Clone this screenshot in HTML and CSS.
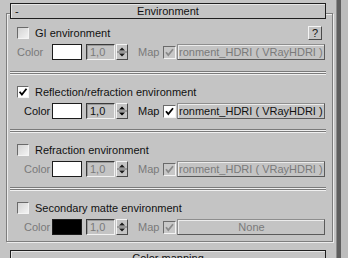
FILE: index.html
```html
<!DOCTYPE html>
<html lang="en">
<head>
    <meta charset="UTF-8">
    <title>Environment</title>
    <link rel="stylesheet" href="styles.css">
</head>
<body>
    <div class="workspace">
        <div class="panel">
            <div class="rollout">
                <div class="rollout-head"><span class="toggle">-</span><span>Environment</span><span></span></div>

                <div class="section first">
                    <div class="check-row">
                        <span class="check"><span class="box"></span>GI environment</span>
                        <span class="help">?</span>
                    </div>
                    <div class="ctrl-row">
                        <span class="lbl lbl-first dim">Color</span>
                        <span class="swatch"></span>
                        <span class="spin dim">1,0</span>
                        <span class="arrows"><svg width="12" height="16" viewBox="0 0 12 16"><path d="M3 6.5h6L6 3.5z M3 9.5h6L6 12.5z" fill="#1a1a1a"/><path d="M1 8h10" stroke="#6a6a6a"/></svg></span>
                        <span class="map-lbl dim">Map</span>
                        <span class="box box-map off"><svg width="11" height="11" viewBox="0 0 11 11"><path d="M2 5.2L4.3 8 9 2.2" fill="none" stroke="#8a8a8a" stroke-width="1.8"/></svg></span>
                        <span class="map-btn dim">ronment_HDRI ( VRayHDRI )</span>
                    </div>
                </div>
                <div class="sep"></div>

                <div class="section">
                    <div class="check-row">
                        <span class="check"><span class="box on"><svg width="10" height="10" viewBox="0 0 10 10"><path d="M1.6 4.8L3.9 7.6 8.5 1.8" fill="none" stroke="#000" stroke-width="1.8"/></svg></span>Reflection/refraction environment</span>
                    </div>
                    <div class="ctrl-row">
                        <span class="lbl">Color</span>
                        <span class="swatch"></span>
                        <span class="spin">1,0</span>
                        <span class="arrows"><svg width="12" height="16" viewBox="0 0 12 16"><path d="M3 6.5h6L6 3.5z M3 9.5h6L6 12.5z" fill="#000"/><path d="M1 8h10" stroke="#6a6a6a"/></svg></span>
                        <span class="map-lbl">Map</span>
                        <span class="box box-map on"><svg width="11" height="11" viewBox="0 0 11 11"><path d="M2 5.2L4.3 8 9 2.2" fill="none" stroke="#000" stroke-width="1.8"/></svg></span>
                        <span class="map-btn">ronment_HDRI ( VRayHDRI )</span>
                    </div>
                </div>
                <div class="sep"></div>

                <div class="section">
                    <div class="check-row">
                        <span class="check"><span class="box"></span>Refraction environment</span>
                    </div>
                    <div class="ctrl-row">
                        <span class="lbl dim">Color</span>
                        <span class="swatch"></span>
                        <span class="spin dim">1,0</span>
                        <span class="arrows"><svg width="12" height="16" viewBox="0 0 12 16"><path d="M3 6.5h6L6 3.5z M3 9.5h6L6 12.5z" fill="#1a1a1a"/><path d="M1 8h10" stroke="#6a6a6a"/></svg></span>
                        <span class="map-lbl dim">Map</span>
                        <span class="box box-map off"><svg width="11" height="11" viewBox="0 0 11 11"><path d="M2 5.2L4.3 8 9 2.2" fill="none" stroke="#8a8a8a" stroke-width="1.8"/></svg></span>
                        <span class="map-btn dim">ronment_HDRI ( VRayHDRI )</span>
                    </div>
                </div>
                <div class="sep"></div>

                <div class="section last">
                    <div class="check-row">
                        <span class="check"><span class="box"></span>Secondary matte environment</span>
                    </div>
                    <div class="ctrl-row">
                        <span class="lbl dim">Color</span>
                        <span class="swatch black"></span>
                        <span class="spin dim">1,0</span>
                        <span class="arrows"><svg width="12" height="16" viewBox="0 0 12 16"><path d="M3 6.5h6L6 3.5z M3 9.5h6L6 12.5z" fill="#1a1a1a"/><path d="M1 8h10" stroke="#6a6a6a"/></svg></span>
                        <span class="map-lbl dim">Map</span>
                        <span class="box box-map off"><svg width="11" height="11" viewBox="0 0 11 11"><path d="M2 5.2L4.3 8 9 2.2" fill="none" stroke="#8a8a8a" stroke-width="1.8"/></svg></span>
                        <span class="map-btn none dim">None</span>
                    </div>
                </div>
            </div>

            <div class="rollout next">
                <div class="rollout-head"><span></span><span>Color mapping</span><span></span></div>
            </div>
        </div>
        <div class="scroll"></div>
    </div>
</body>
</html>
```

FILE: styles.css
```css
body {
    margin: 0;
    width: 348px;
    height: 258px;
    overflow: hidden;
    background: #c4c4c4;
    color: #111;
    font-family: "Liberation Sans", Arial, sans-serif;
    font-size: 11px;
}

.workspace {
    display: flex;
    height: 258px;
}

.panel {
    width: 336px;
    padding-top: 3px;
}

.scroll {
    flex: 1;
    border-left: 1px solid #8c8c8c;
    background: linear-gradient(to right, #5e5e5e 0 4px, #bcbcbc 4px);
}

.rollout {
    margin: 10px 3px 0 6px;
    border: 1px solid #7e7e7e;
    box-shadow: inset 1px 1px 0 #ececec, 1px 1px 0 #ececec;
}

.rollout.next {
    margin-top: 18px;
}

.rollout-head {
    display: grid;
    grid-template-columns: 1fr auto 1fr;
    height: 14px;
    line-height: 14px;
    margin: -11px 6px 0 3px;
    border: 1px solid #1e1e1e;
    background: #c4c4c4;
    box-shadow: inset 1px 1px 0 #e6e6e6;
}

.toggle {
    padding-left: 4px;
}

.section {
    padding: 10px 0 10px 0;
}

.section.first {
    padding: 7px 0 11px 0;
}

.section.last {
    padding-bottom: 6px;
}

.sep {
    height: 1px;
    margin: 0 6px 1px 3px;
    border-top: 1px solid #7a7a7a;
    border-bottom: 1px solid #7a7a7a;
    background: #f0f0f0;
    box-shadow: 0 1px 0 #f0f0f0;
}

.check-row {
    display: flex;
    justify-content: space-between;
    align-items: center;
    height: 14px;
    padding: 0 10px 0 10px;
}

.check {
    display: flex;
    align-items: center;
    gap: 6px;
    font-size: 11px;
}

.box {
    display: flex;
    align-items: center;
    justify-content: center;
    box-sizing: border-box;
    width: 12px;
    height: 12px;
    border: 1px solid;
    border-color: #6a6a6a #f4f4f4 #f4f4f4 #6a6a6a;
    background: linear-gradient(135deg, #d4d4d4, #f2f2f2);
}

.box.on {
    background: #fff;
}

.box-map {
    width: 13px;
    height: 13px;
    margin: 0 1px 0 4px;
}

.box-map.off {
    background: #c8c8c8;
}

.help {
    box-sizing: border-box;
    width: 14px;
    height: 14px;
    line-height: 12px;
    text-align: center;
    border: 1px solid;
    border-color: #f4f4f4 #4a4a4a #4a4a4a #f4f4f4;
}

.ctrl-row {
    display: flex;
    align-items: center;
    height: 16px;
    margin-top: 4px;
    padding-left: 17px;
}

.lbl {
    width: 28px;
    font-size: 11px;
}

.lbl-first {
    width: 35px;
    margin-left: -7px;
}

.dim {
    color: #7a7a7a;
}

.swatch {
    box-sizing: border-box;
    width: 30px;
    height: 16px;
    border: 1px solid #1c1c1c;
    background: #fff;
    margin-right: 4px;
}

.swatch.black {
    background: #000;
}

.spin {
    box-sizing: border-box;
    width: 29px;
    height: 16px;
    line-height: 14px;
    padding-left: 3px;
    border: 1px solid;
    border-color: #3a3a3a #f2f2f2 #f2f2f2 #3a3a3a;
    box-shadow: inset 1px 1px 0 #9a9a9a;
}

.arrows {
    box-sizing: border-box;
    width: 12px;
    height: 16px;
    margin-left: 1px;
    border: 1px solid;
    border-color: #f4f4f4 #4a4a4a #4a4a4a #f4f4f4;
    display: flex;
    align-items: center;
    justify-content: center;
}

.arrows svg {
    margin: -1px;
}

.map-lbl {
    margin-left: 10px;
    width: 21px;
}

.map-btn {
    box-sizing: border-box;
    width: 148px;
    height: 16px;
    line-height: 14px;
    padding-left: 1px;
    white-space: nowrap;
    overflow: hidden;
    border: 1px solid;
    border-color: #8e8e8e #5a5a5a #5a5a5a #8e8e8e;
    box-shadow: inset 1px 1px 0 #ececec;
}

.map-btn.none {
    text-align: center;
}
```
